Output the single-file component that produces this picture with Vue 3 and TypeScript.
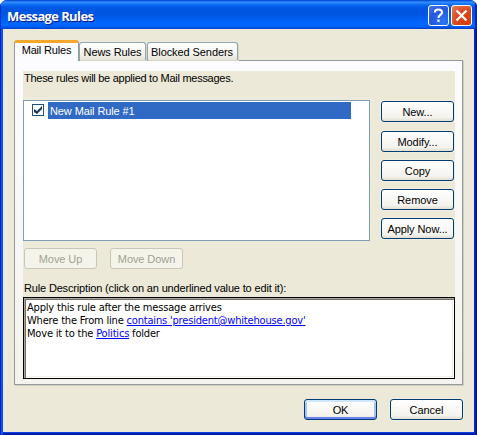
<script setup lang="ts">
import { ref } from 'vue'

interface Tab { id: string; label: string }

const tabs: Tab[] = [
  { id: 'mail', label: 'Mail Rules' },
  { id: 'news', label: 'News Rules' },
  { id: 'blocked', label: 'Blocked Senders' },
]
const activeTab = ref<string>('mail')
const ruleEnabled = ref<boolean>(true)
const actions: { id: string; label: string }[] = [
  { id: 'new', label: 'New...' },
  { id: 'modify', label: 'Modify...' },
  { id: 'copy', label: 'Copy' },
  { id: 'remove', label: 'Remove' },
  { id: 'apply', label: 'Apply Now...' },
]
</script>

<template>
  <div class="window">
    <header class="titlebar">
      <h1 class="title">Message Rules</h1>
      <button class="caption help" aria-label="Help">
        <svg width="21" height="21" viewBox="0 0 21 21">
          <path d="M6.8 7.6C6.8 5.4 8.4 4.5 10.4 4.5C12.7 4.5 14 5.6 14 7.4C14 10 10.4 9.8 10.4 13" fill="none" stroke="#fff" stroke-width="2" />
          <rect x="9.3" y="14.6" width="2.3" height="2.2" fill="#fff" />
        </svg>
      </button>
      <button class="caption close" aria-label="Close">
        <svg width="21" height="21" viewBox="0 0 21 21">
          <path d="M5.5 5.5L15.5 15.5M15.5 5.5L5.5 15.5" stroke="#fff" stroke-width="2.2" />
        </svg>
      </button>
    </header>

    <main class="client">
      <nav class="tabs">
        <button
          v-for="tab in tabs"
          :key="tab.id"
          class="tab"
          :class="[tab.id, { active: tab.id === activeTab }]"
          @click="activeTab = tab.id"
        ><span>{{ tab.label }}</span></button>
      </nav>
      <section class="pane">
        <div class="sheet">
          <p class="intro"><span>These rules will be applied to Mail messages.</span></p>
          <div class="rules">
            <div class="list">
              <div class="rule">
                <button class="check" aria-label="Enable rule" @click="ruleEnabled = !ruleEnabled">
                  <svg v-if="ruleEnabled" width="8" height="8" viewBox="0 0 8 8">
                    <path d="M0 3V6L3 8L8 3V0L3 5Z" fill="#1c3563" />
                  </svg>
                </button>
                <span class="name"><span>New Mail Rule #1</span></span>
              </div>
            </div>
            <div class="actions">
              <button v-for="a in actions" :key="a.id" class="btn" :class="a.id"><span>{{ a.label }}</span></button>
            </div>
          </div>
          <div class="order">
            <button class="btn moveup" disabled><span>Move Up</span></button>
            <button class="btn movedown" disabled><span>Move Down</span></button>
          </div>
          <p class="caption-line"><span>Rule Description (click on an underlined value to edit it):</span></p>
          <div class="description">
            <p>Apply this rule after the message arrives</p>
            <p>Where the From line <a>contains 'president@whitehouse.gov'</a></p>
            <p>Move it to the <a>Politics</a> folder</p>
          </div>
        </div>
      </section>
      <footer class="footer">
        <button class="btn ok"><span>OK</span></button>
        <button class="btn cancel"><span>Cancel</span></button>
      </footer>
    </main>
  </div>
</template>

<style>
body { background: #fff; }
</style>

<style scoped>
.window, .window * { box-sizing: border-box; }
.window {
  width: 477px; height: 435px;
  padding: 0 3px 3px;
  border-radius: 7px 7px 0 0;
  background: linear-gradient(90deg, #0019cf 0, #0019cf 1px, #0a5cf0 1px, #0050ee 3px, #0050ee 474px, #0038d8 474px, #001090 476px);
  font: 11px/13px "Liberation Sans", Arial, sans-serif;
  letter-spacing: -0.08px;
  color: #000;
  overflow: hidden;
}
button { font: inherit; letter-spacing: inherit; color: inherit; padding: 0; margin: 0; }
button span, p span { white-space: nowrap; }
p { margin: 0; white-space: nowrap; }
.titlebar {
  height: 29px; margin: 0 -3px; padding: 5px 5px 0 7px;
  display: flex; gap: 2px;
  background: linear-gradient(180deg, #0048d0 0, #0b5ce0 1px, #3a92ff 2px, #1475f8 4px, #0058e4 7px, #0054e0 13px, #0060f4 20px, #0068ff 25px, #005af0 27px, #003fc4 29px);
  box-shadow: inset 1px 0 #0030c8, inset -2px 0 #0026b0;
}
.title {
  flex: 1; margin: 0;
  font: bold 13px/23px "Open Sans", "Noto Sans", sans-serif;
  letter-spacing: -0.62px;
  color: #fff; text-shadow: 1px 1px #0a1883;
}
.caption {
  width: 21px; height: 21px;
  border: 1px solid #fff; border-radius: 3px;
  display: flex; align-items: center; justify-content: center;
}
.caption svg { flex: none; }
.help { background: radial-gradient(circle at 75% 80%, #2a78f8, #2458dc 60%, #4a7cec); }
.close { background: radial-gradient(circle at 80% 85%, #d83c08, #dc4a20 55%, #ea8060); }
.client {
  height: 403px; padding: 11px 11px 0;
  background: #ece9d8;
  box-shadow: 0 1px #0046e6, 0 3px #0018a8;
}
.tabs { display: flex; align-items: flex-end; height: 20px; }
.tab {
  height: 18px; border: 1px solid #91a7b4; border-bottom: 0;
  border-radius: 3px 3px 0 0;
  background: linear-gradient(#fff, #f4f3ee 60%, #e6e4da);
  display: flex; justify-content: center; line-height: 19px;
  box-shadow: 1px 1px #d8d5c7;
}
.news { width: 67px; }
.blocked { width: 91px; margin-left: 1px; padding-right: 1px; }
.mail { width: 65px; }
.tab.active {
  height: 21px; margin-bottom: -1px; position: relative;
  border-top: 3px solid #f5a72c; border-right-color: #919b9c; border-left-color: #919b9c;
  background: #fcfcfe; line-height: 14px; box-shadow: none;
  letter-spacing: -0.16px;
}
.pane {
  width: 449px; height: 325px; padding: 10px 7px 0 8px;
  border: 1px solid #919b9c;
  background: linear-gradient(#fcfcfe, #f4f3ee);
  box-shadow: 1px 1px #d0cebf;
}
.sheet { width: 432px; height: 308px; background: #ece9d8; }
.intro { height: 29px; padding-left: 1px; line-height: 15px; letter-spacing: -0.27px; }
.rules { display: flex; gap: 11px; height: 141px; }
.list { width: 347px; height: 141px; border: 1px solid #7f9db9; background: #fff; padding-top: 1px; }
.rule { display: flex; padding-left: 8px; height: 17px; }
.check {
  width: 12px; height: 12px; margin: 2px 4px 0 0;
  border: 1px solid #1c5180; background: #fff;
  display: flex; align-items: center; justify-content: center;
}
.check svg { flex: none; }
.name { width: 303px; padding-left: 2px; background: #316ac5; color: #fff; line-height: 18px; letter-spacing: -0.1px; }
.actions { display: flex; flex-direction: column; gap: 8px; padding-top: 1px; }
.actions .new { margin-bottom: 1px; }
.btn {
  width: 73px; height: 21px;
  border: 1px solid #003c74; border-radius: 3px;
  background: linear-gradient(#fff, #f4f3ee 80%, #e2dfd2);
  display: flex; align-items: center; justify-content: center;
  padding-top: 1px;
  box-shadow: 0 0 0 1px rgba(255, 255, 255, .22);
}
.btn:disabled { border-color: #c9c7ba; background: #f5f4ea; color: #a1a192; box-shadow: none; }
.order { display: flex; gap: 13px; padding: 7px 0 0 1px; height: 40px; }
.caption-line { height: 16px; padding-left: 1px; line-height: 14px; letter-spacing: -0.16px; }
.description {
  height: 82px; background: #fff; padding: 3px 0 0 3px;
  border: 1px solid #000;
  box-shadow: inset 1px 1px #aca899, inset 2px 2px #716f64, inset -1px -1px #fff, inset -2px -2px #f1efe2;
  font-family: "DejaVu Sans Condensed", "DejaVu Sans", sans-serif;
  letter-spacing: -0.18px;
}
.description a { color: #00f; text-decoration: underline; }
.footer { display: flex; justify-content: flex-end; gap: 13px; padding-top: 14px; }
.ok { box-shadow: inset 0 2px #cee7ff, inset 0 -2px #6982ee, inset 2px 0 #a9c3f5, inset -2px 0 #a9c3f5; }
</style>
